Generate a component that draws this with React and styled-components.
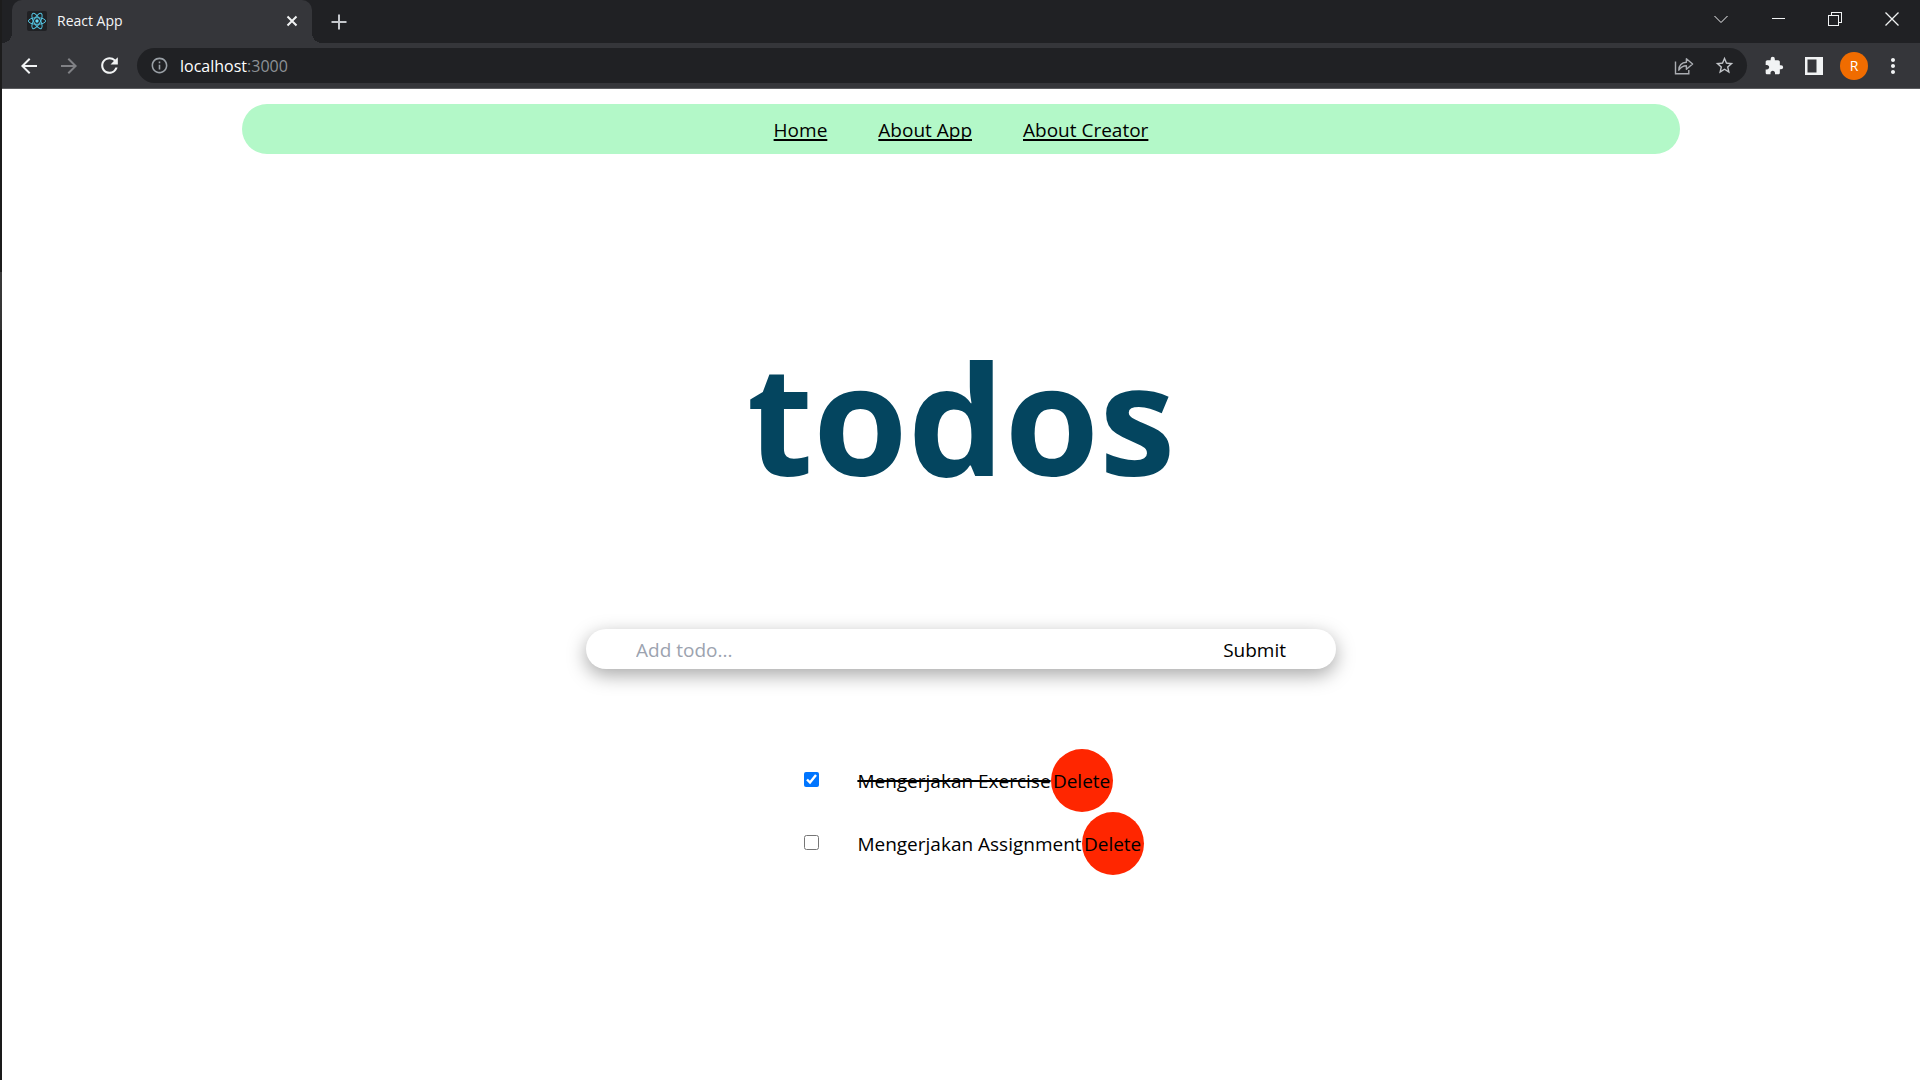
import React, { useState } from "react";
import styled, { createGlobalStyle } from "styled-components";
import {
  MdArrowBack,
  MdArrowForward,
  MdRefresh,
  MdInfoOutline,
  MdStarBorder,
  MdExtension,
  MdMoreVert,
} from "react-icons/md";

const GlobalStyle = createGlobalStyle`
  *, *::before, *::after { box-sizing: border-box; }
  body {
    margin: 0;
    background: #fff;
    color: #000;
    font-family: "Open Sans", "Noto Sans", sans-serif;
    font-size: 19px;
    line-height: 30px;
  }
  button, input {
    margin: 0;
    padding: 0;
    border: 0;
    background: none;
    color: inherit;
    font: inherit;
  }
  button { cursor: pointer; }
  svg { display: block; flex: none; }
`;

const Frame = styled.div`
  display: flex;
  min-height: 100vh;
`;

const DesktopEdge = styled.div`
  flex: none;
  width: 2px;
  background: linear-gradient(#1c1c1c 272px, #3a3a3a 272px, #333 330px, #1a1a1a 330px);
`;

const Window = styled.div`
  flex: 1;
  min-width: 0;
`;

const TabStrip = styled.div`
  display: flex;
  height: 43px;
  padding-left: 10px;
  background: #202124;
`;

const Tab = styled.div`
  position: relative;
  display: flex;
  align-items: center;
  gap: 10px;
  width: 300px;
  padding: 0 10px 2px 15px;
  border-radius: 10px 10px 0 0;
  background: #35363a;
  color: #f4f5f7;

  &::before,
  &::after {
    content: "";
    position: absolute;
    bottom: 0;
    width: 10px;
    height: 10px;
  }
  &::before {
    right: 100%;
    background: radial-gradient(circle at 0 0, transparent 10px, #35363a 10px);
  }
  &::after {
    left: 100%;
    background: radial-gradient(circle at 100% 0, transparent 10px, #35363a 10px);
  }
`;

const TabTitle = styled.span`
  flex: 1;
  font-size: 14px;
`;

const IconButton = styled.button`
  display: flex;
  align-items: center;
  justify-content: center;
  width: ${({ $width }) => $width || 40}px;
  color: ${({ $color }) => $color || "#f1f3f4"};
`;

const WindowControls = styled.div`
  display: flex;
  height: 37px;
  margin-left: auto;
`;

const Toolbar = styled.div`
  display: flex;
  align-items: center;
  height: 46px;
  padding: 0 8px 0 7px;
  border-bottom: 1px solid #5c5d60;
  background: #35363a;
`;

const AddressBar = styled.div`
  display: flex;
  flex: 1;
  align-items: center;
  height: 35px;
  margin: 0 7px 0 8px;
  padding: 0 3px 0 2px;
  border-radius: 18px;
  background: #202124;
`;

const Address = styled.div`
  flex: 1;
  padding-left: 1px;
  color: #8d9196;
  font-size: 16px;

  b {
    color: #fff;
    font-weight: 400;
  }
`;

const Avatar = styled.button`
  width: 28px;
  height: 28px;
  margin: 0 6px;
  border-radius: 50%;
  background: #f06c00;
  color: #fff;
  font-size: 14px;
  line-height: 28px;
`;

const Page = styled.main`
  display: flex;
  flex-direction: column;
  align-items: center;
  padding-top: 15px;
`;

const Nav = styled.nav`
  display: flex;
  align-items: center;
  justify-content: center;
  gap: 51px;
  width: 75%;
  height: 50px;
  padding-top: 2px;
  border-radius: 25px;
  background: #b3f8c8;
`;

const NavLink = styled.a`
  color: #000;
  text-decoration: underline;
  text-decoration-thickness: 2px;
  text-underline-offset: 2px;
  text-decoration-skip-ink: none;
`;

const Title = styled.h1`
  margin: 143px 0 92px;
  color: #04455f;
  font-size: 153px;
  font-weight: 700;
  line-height: 240px;
`;

const TodoForm = styled.form`
  display: flex;
  align-items: center;
  width: 100%;
  max-width: 750px;
  height: 40px;
  padding: 2px 50px 0;
  border-radius: 20px;
  background: #fff;
  box-shadow: 0 6px 19px rgba(0, 0, 0, 0.35);
`;

const TodoInput = styled.input`
  flex: 1;
  min-width: 0;
  outline: none;

  &::placeholder {
    color: #9ca3af;
    opacity: 1;
  }
`;

const TodoList = styled.ul`
  margin: 80px 0 0;
  padding: 0;
  list-style: none;
`;

const TodoItem = styled.li`
  display: flex;
  align-items: center;
  height: 63px;
`;

const TodoCheck = styled.input`
  width: 15px;
  height: 15px;
  margin: 0 38px 2px 26px;
  accent-color: #0075ff;
`;

const TodoLabel = styled.label`
  text-decoration: ${({ $done }) => ($done ? "line-through" : "none")};
  text-decoration-thickness: 2px;
`;

const DeleteButton = styled.button`
  width: 62px;
  height: 63px;
  border-radius: 50%;
  background: #ff2600;
`;

const ReactLogo = () => (
  <svg width="20" height="20" viewBox="0 0 20 20" aria-hidden="true">
    <rect width="20" height="20" rx="2" fill="#202124" />
    <g fill="none" stroke="#53c1de" strokeWidth="1">
      <ellipse cx="10" cy="10" rx="8.6" ry="3.3" />
      <ellipse cx="10" cy="10" rx="8.6" ry="3.3" transform="rotate(60 10 10)" />
      <ellipse cx="10" cy="10" rx="8.6" ry="3.3" transform="rotate(120 10 10)" />
    </g>
    <circle cx="10" cy="10" r="1.7" fill="#61dafb" />
  </svg>
);

const Strokes = ({ d, size = 14, weight = 1, crisp }) => (
  <svg
    width={size}
    height={size}
    viewBox={`0 0 ${size} ${size}`}
    fill="none"
    stroke="currentColor"
    strokeWidth={weight}
    shapeRendering={crisp ? "crispEdges" : "auto"}
    aria-hidden="true"
  >
    <path d={d} />
  </svg>
);

const ShareIcon = () => (
  <svg width="20" height="20" viewBox="0 0 20 20" fill="none" stroke="currentColor" strokeWidth="1.4" aria-hidden="true">
    <path d="M1.5 5.5V17.8H14.8V14" />
    <path d="M4.8 14.2C5 9.5 7.8 6.6 12.4 6.3V2.7L18.6 8L12.4 13.2V9.8C9.2 9.8 6.8 11.2 4.8 14.2Z" strokeLinejoin="round" />
  </svg>
);

const SidePanelIcon = () => (
  <svg width="18" height="18" viewBox="0 0 18 18" aria-hidden="true">
    <path fillRule="evenodd" fill="currentColor" d="M0 0H18V18H0ZM2.5 2.5V15.5H11.5V2.5Z" />
  </svg>
);

const initialTodos = [
  { id: 1, title: "Mengerjakan Exercise", done: true },
  { id: 2, title: "Mengerjakan Assignment", done: false },
];

function BrowserChrome() {
  return (
    <header>
      <TabStrip>
        <Tab>
          <ReactLogo />
          <TabTitle>React App</TabTitle>
          <IconButton $width={20} aria-label="Close tab">
            <Strokes d="M2.5 2.5L11.5 11.5M11.5 2.5L2.5 11.5" weight={2} />
          </IconButton>
        </Tab>
        <IconButton $width={54} $color="#c4c7cb" aria-label="New tab">
          <Strokes size={16} d="M8 .5V15.5M.5 8H15.5" weight={2} />
        </IconButton>
        <WindowControls>
          <IconButton $width={56} aria-label="Search tabs">
            <Strokes d="M.5 4L7 10.5L13.5 4" />
          </IconButton>
          <IconButton $width={57} aria-label="Minimize">
            <Strokes d="M.5 6.5H13.5" crisp />
          </IconButton>
          <IconButton $width={57} aria-label="Restore">
            <Strokes d="M.5 3.5H10.5V13.5H.5ZM3.5 3V.5H13.5V10.5H11" crisp />
          </IconButton>
          <IconButton $width={57} aria-label="Close window">
            <Strokes d="M.5 .5L13.5 13.5M13.5 .5L.5 13.5" weight={1.3} />
          </IconButton>
        </WindowControls>
      </TabStrip>
      <Toolbar>
        <IconButton aria-label="Back"><MdArrowBack size={24} /></IconButton>
        <IconButton $color="#808185" aria-label="Forward"><MdArrowForward size={24} /></IconButton>
        <IconButton aria-label="Reload"><MdRefresh size={25} /></IconButton>
        <AddressBar>
          <IconButton $color="#9aa0a6" aria-label="Site information"><MdInfoOutline size={19} /></IconButton>
          <Address><b>localhost</b>:3000</Address>
          <IconButton $color="#aaadb2" aria-label="Share"><ShareIcon /></IconButton>
          <IconButton $color="#c2c5c9" aria-label="Bookmark"><MdStarBorder size={21} /></IconButton>
        </AddressBar>
        <IconButton aria-label="Extensions"><MdExtension size={20} /></IconButton>
        <IconButton aria-label="Side panel"><SidePanelIcon /></IconButton>
        <Avatar aria-label="Profile">R</Avatar>
        <IconButton $width={38} aria-label="Menu"><MdMoreVert size={24} /></IconButton>
      </Toolbar>
    </header>
  );
}

export default function App() {
  const [todos, setTodos] = useState(initialTodos);
  const [draft, setDraft] = useState("");

  const addTodo = (event) => {
    event.preventDefault();
    if (!draft.trim()) return;
    setTodos([...todos, { id: Date.now(), title: draft.trim(), done: false }]);
    setDraft("");
  };
  const toggle = (id) =>
    setTodos(todos.map((todo) => (todo.id === id ? { ...todo, done: !todo.done } : todo)));
  const remove = (id) => setTodos(todos.filter((todo) => todo.id !== id));

  return (
    <Frame>
      <GlobalStyle />
      <DesktopEdge />
      <Window>
        <BrowserChrome />
        <Page>
          <Nav>
            <NavLink href="#home">Home</NavLink>
            <NavLink href="#about-app">About App</NavLink>
            <NavLink href="#about-creator">About Creator</NavLink>
          </Nav>
          <Title>todos</Title>
          <TodoForm onSubmit={addTodo}>
            <TodoInput
              type="text"
              aria-label="Add todo"
              placeholder="Add todo..."
              value={draft}
              onChange={(event) => setDraft(event.target.value)}
            />
            <button type="submit">Submit</button>
          </TodoForm>
          <TodoList>
            {todos.map((todo) => (
              <TodoItem key={todo.id}>
                <TodoCheck
                  type="checkbox"
                  id={`todo-${todo.id}`}
                  checked={todo.done}
                  onChange={() => toggle(todo.id)}
                />
                <TodoLabel htmlFor={`todo-${todo.id}`} $done={todo.done}>{todo.title}</TodoLabel>
                <DeleteButton type="button" onClick={() => remove(todo.id)}>Delete</DeleteButton>
              </TodoItem>
            ))}
          </TodoList>
        </Page>
      </Window>
    </Frame>
  );
}
